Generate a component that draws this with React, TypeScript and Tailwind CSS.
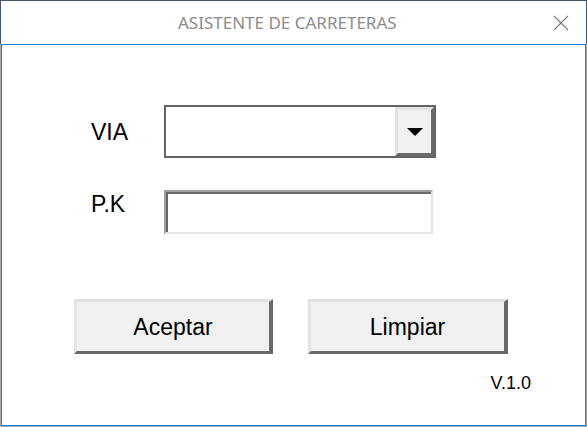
const CloseIcon = () => (
  <svg width="16" height="16" viewBox="0 0 16 16" className="block">
    <path d="M1 1 L15 15 M15 1 L1 15" stroke="#7a7a7a" strokeWidth="1.1" fill="none" />
  </svg>
);

const ArrowDown = () => (
  <svg width="16" height="8" viewBox="0 0 16 8" className="block">
    <path d="M0 0 H16 L8 8 Z" fill="#000" />
  </svg>
);

const FormButton = ({ label, width }: { label: string; width: string }) => (
  <button
    className={`${width} h-[55px] bg-[#f0f0f0] border-t-[3px] border-l-[3px] border-b-[3px] border-r-[4px] border-t-[#e3e3e3] border-l-[#e3e3e3] border-b-[#696969] border-r-[#696969] text-[23px] leading-[24px] text-black flex items-center justify-center`}
  >
    {label}
  </button>
);

export default function App() {
  return (
    <div
      className="w-[587px] h-[427px] flex flex-col bg-white"
      style={{ fontFamily: '"Liberation Sans", Arial, sans-serif' }}
    >
      {/* title bar */}
      <div className="h-[44px] shrink-0 border-t border-x border-[#435670] flex items-center">
        <span
          className="ml-[177px] text-[17px] leading-none text-[#8c8c8c] tracking-[0px]"
          style={{ fontFamily: '"Noto Sans", "Open Sans", sans-serif' }}
        >
          ASISTENTE DE CARRETERAS
        </span>
        <span className="ml-auto mr-[17px]">
          <CloseIcon />
        </span>
      </div>

      {/* client area */}
      <div className="flex-1 flex flex-col border-x border-b border-[#a8a8a8]">
        <div className="flex-1 flex flex-col border border-[#1a7fd6]">
          <div className="mt-[60px] flex items-start">
            <label className="ml-[89px] w-[73px] mt-[15px] text-[23px] leading-[24px] text-black">
              VIA
            </label>
            <div className="w-[272px] h-[53px] border-2 border-[#646464] bg-white flex justify-end">
              <div className="w-[39px] h-full bg-[#f0f0f0] border-t-[3px] border-l-[3px] border-b-[3px] border-r-[3px] border-t-[#e3e3e3] border-l-[#e3e3e3] border-b-[#696969] border-r-[#696969] flex items-center justify-center">
                <ArrowDown />
              </div>
            </div>
          </div>

          <div className="mt-[32px] flex items-start">
            <label className="ml-[89px] w-[73px] mt-[2px] text-[23px] leading-[24px] text-black">
              P.K
            </label>
            <div className="w-[269px] h-[44px] border-2 border-t-[#a0a0a0] border-l-[#a0a0a0] border-b-[#e3e3e3] border-r-[#e3e3e3]">
              <div className="w-full h-full border-t-2 border-l-2 border-[#696969] bg-white" />
            </div>
          </div>

          <div className="mt-[65px] ml-[72px] flex gap-[35px]">
            <FormButton label="Aceptar" width="w-[199px]" />
            <FormButton label="Limpiar" width="w-[200px]" />
          </div>

          <div className="mt-[20px] self-end mr-[54px] text-[18px] leading-[18px] text-black">
            V.1.0
          </div>
        </div>
      </div>
    </div>
  );
}
